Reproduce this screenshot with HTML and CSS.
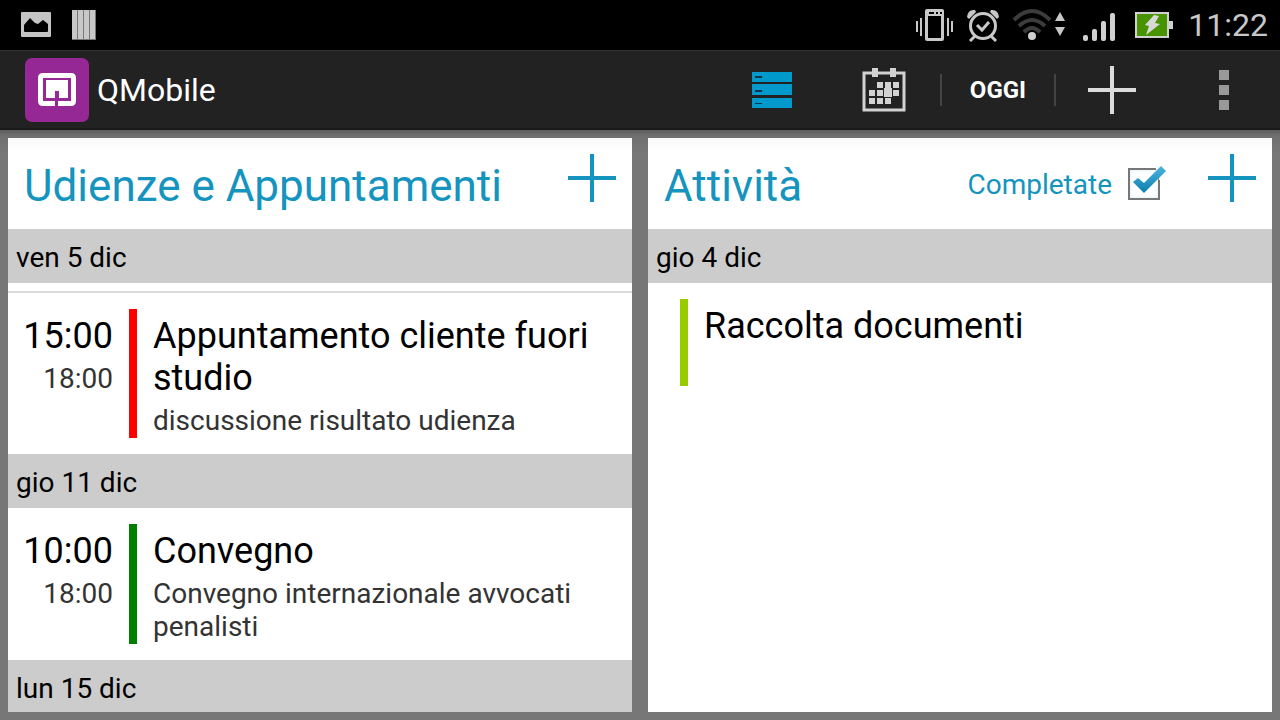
FILE: index.html
```html
<!DOCTYPE html>
<html lang="it">
<head>
    <meta charset="UTF-8">
    <meta name="viewport" content="width=device-width, initial-scale=1.0">
    <title>QMobile</title>
    <link rel="stylesheet" href="styles.css">
</head>
<body>
    <div class="status-bar">
        <div class="status-left">
            <svg width="30" height="26" viewBox="0 0 30 26">
                <path fill="#c4c4c4" fill-rule="evenodd" d="M1 0H29Q30 0 30 1V24Q30 25 29 25H1Q0 25 0 24V1Q0 0 1 0ZM3 13V19Q3 20 4 20H26Q27 20 27 19V12L22 8L17 12L14 11L9 6Z"/>
            </svg>
            <svg width="24" height="30" viewBox="0 0 24 30">
                <rect x="0" y="0" width="24" height="30" fill="#777"/>
                <path fill="#c8c8c8" d="M0 0H5V29H0ZM6 0H11V29H6ZM12 0H17V29H12ZM18 0H23V29H18Z"/>
            </svg>
        </div>
        <div class="status-right">
            <svg width="38" height="34" viewBox="0 0 38 34">
                <path fill="none" stroke="#c8c8c8" stroke-width="2" d="M2 13V24M6 10V28M33 10V28M37 13V24"/>
                <path fill="#c8c8c8" fill-rule="evenodd" d="M12 1H27Q29 1 29 3V31Q29 33 27 33H12Q10 33 10 31V3Q10 1 12 1ZM13 8V30H26V8ZM14 4V6H19V4ZM21 4V6H23V4ZM25 4V6H27V4Z"/>
            </svg>
            <svg width="34" height="34" viewBox="0 0 34 34">
                <circle cx="17" cy="18" r="12.5" fill="none" stroke="#c8c8c8" stroke-width="3"/>
                <path fill="none" stroke="#c8c8c8" stroke-width="3" d="M11 17L16 22L23 14M9 28L4 33M25 28L30 33"/>
                <path fill="#c8c8c8" d="M1 9Q2 1 9 2L10 4L3 11ZM33 9Q32 1 25 2L24 4L31 11Z"/>
            </svg>
            <svg width="57" height="34" viewBox="0 0 57 34">
                <g fill="none" stroke="#3c3c3c" stroke-width="4">
                    <path d="M1 12Q19 -6 37 12"/>
                    <path d="M6 18Q19 6 32 18"/>
                    <path d="M11 24Q19 16 27 24"/>
                </g>
                <circle cx="19" cy="28" r="4" fill="#d0d0d0"/>
                <path fill="#c8c8c8" d="M47 4L52 13H42ZM47 28L52 19H42Z"/>
            </svg>
            <svg width="39" height="34" viewBox="0 0 39 34">
                <g fill="#d0d0d0">
                    <rect x="0" y="27" width="5" height="6" rx="2"/>
                    <rect x="9" y="21" width="5" height="12" rx="2"/>
                    <rect x="18" y="13" width="5" height="20" rx="2"/>
                    <rect x="27" y="5" width="5" height="28" rx="2"/>
                </g>
            </svg>
            <svg width="40" height="34" viewBox="0 0 40 34">
                <rect x="1" y="5" width="32" height="24" fill="#479400" stroke="#d0d0d0" stroke-width="2"/>
                <rect x="34" y="13" width="4" height="8" fill="#d0d0d0"/>
                <path fill="#d8d8d8" d="M19 7L10 17L14 18L11 27L25 16L20 15L24 8Z"/>
            </svg>
            <span class="clock">11:22</span>
        </div>
    </div>

    <header class="action-bar">
        <svg class="app-logo" width="64" height="64" viewBox="0 0 64 64">
            <rect width="64" height="64" rx="7" fill="#962896"/>
            <path fill="#fff" fill-rule="evenodd" d="M18 15H46Q51 15 51 20V43Q51 48 46 48H33V43H46V20H18V43H30V48H18Q13 48 13 43V20Q13 15 18 15Z"/>
            <path fill="#fff" d="M21 22H43V40H34V33H30V40H21Z"/>
        </svg>
        <h1>QMobile</h1>
        <nav class="actions">
            <button class="action" aria-label="Elenco">
                <svg width="40" height="36" viewBox="0 0 40 36">
                    <path fill="#0099cc" d="M0 0H40V10H0ZM0 12H40V23H0ZM0 26H40V36H0Z"/>
                    <path fill="#10364a" d="M3 4H10V6H3ZM3 18H10V20H3ZM3 31H10V32H3Z"/>
                </svg>
            </button>
            <button class="action" aria-label="Calendario">
                <svg width="44" height="44" viewBox="0 0 44 44">
                    <rect x="2" y="5" width="40" height="37" fill="none" stroke="#d2d2d2" stroke-width="3"/>
                    <g fill="#d2d2d2">
                        <path d="M10 0H16V9H10ZM28 0H34V9H28Z"/>
                        <path d="M15 14H21V20H15ZM23 14H29V20H23ZM31 14H37V20H31Z"/>
                        <path d="M7 22H13V28H7ZM15 22H21V28H15ZM22 20H30V29H22ZM31 22H37V28H31Z"/>
                        <path d="M7 30H13V36H7ZM15 30H21V36H15ZM23 30H29V36H23Z"/>
                    </g>
                </svg>
            </button>
            <span class="divider"></span>
            <button class="action today">OGGI</button>
            <span class="divider"></span>
            <button class="action" aria-label="Aggiungi">
                <svg width="48" height="48" viewBox="0 0 48 48">
                    <path fill="#dcdcdc" d="M22 0H26V22H48V26H26V48H22V26H0V22H22Z"/>
                </svg>
            </button>
            <button class="action" aria-label="Altre opzioni">
                <svg width="10" height="40" viewBox="0 0 10 40">
                    <path fill="#999" d="M0 0H10V10H0ZM0 15H10V25H0ZM0 30H10V40H0Z"/>
                </svg>
            </button>
        </nav>
    </header>

    <main class="columns">
        <section class="panel">
            <div class="panel-head">
                <h2>Udienze e Appuntamenti</h2>
                <button class="add" aria-label="Aggiungi appuntamento">
                    <svg width="48" height="48" viewBox="0 0 48 48">
                        <path fill="#1494be" d="M22 0H26V22H48V26H26V48H22V26H0V22H22Z"/>
                    </svg>
                </button>
            </div>
            <h3 class="day">ven 5 dic</h3>
            <hr class="rule">
            <article class="item">
                <div class="time">
                    <div class="start">15:00</div>
                    <div class="end">18:00</div>
                </div>
                <div class="bar red"></div>
                <div class="info">
                    <div class="title">Appuntamento cliente fuori studio</div>
                    <div class="note">discussione risultato udienza</div>
                </div>
            </article>
            <h3 class="day">gio 11 dic</h3>
            <article class="item">
                <div class="time">
                    <div class="start">10:00</div>
                    <div class="end">18:00</div>
                </div>
                <div class="bar green"></div>
                <div class="info">
                    <div class="title">Convegno</div>
                    <div class="note">Convegno internazionale avvocati penalisti</div>
                </div>
            </article>
            <h3 class="day">lun 15 dic</h3>
        </section>

        <section class="panel">
            <div class="panel-head">
                <h2>Attività</h2>
                <label class="completed" for="completed">Completate</label>
                <span class="check">
                    <input type="checkbox" id="completed" checked>
                    <svg width="40" height="34" viewBox="0 0 40 34">
                        <defs>
                            <linearGradient id="tick" x1="0" y1="0" x2="0" y2="1">
                                <stop offset="0" stop-color="#4cb4dc"/>
                                <stop offset="1" stop-color="#0b7fb0"/>
                            </linearGradient>
                        </defs>
                        <path fill="#fff" d="M27 0H40V15H31Z"/>
                        <path fill="url(#tick)" d="M5 17L10 13L16 18L33 1L38 6L16 28Z"/>
                    </svg>
                </span>
                <button class="add" aria-label="Aggiungi attività">
                    <svg width="48" height="48" viewBox="0 0 48 48">
                        <path fill="#1494be" d="M22 0H26V22H48V26H26V48H22V26H0V22H22Z"/>
                    </svg>
                </button>
            </div>
            <h3 class="day">gio 4 dic</h3>
            <article class="item task">
                <div class="bar lime"></div>
                <div class="info">
                    <div class="title">Raccolta documenti</div>
                    <div class="note"></div>
                </div>
            </article>
        </section>
    </main>
</body>
</html>
```

FILE: styles.css
```css
* {
    box-sizing: border-box;
}
body {
    display: flex;
    flex-direction: column;
    height: 100vh;
    margin: 0;
    font-family: Roboto, sans-serif;
    background-color: #777;
    color: black;
}
h1, h2, h3 {
    margin: 0;
    font-weight: normal;
}
button {
    padding: 0;
    border: none;
    background: none;
    font-family: inherit;
    cursor: pointer;
}
svg {
    display: block;
}
.status-bar {
    display: flex;
    justify-content: space-between;
    align-items: center;
    flex: none;
    height: 50px;
    padding: 0 12px 0 21px;
    background-color: black;
}
.status-left {
    display: flex;
    align-items: center;
    gap: 21px;
}
.status-right {
    display: flex;
    align-items: center;
    gap: 13px;
}
.clock {
    color: #c8c8c8;
    font-size: 32px;
}
.action-bar {
    display: flex;
    align-items: center;
    flex: none;
    height: 80px;
    padding-left: 25px;
    border-top: 1px solid #333;
    border-bottom: 2px solid #1a1a1a;
    background-color: #222;
    color: white;
}
.action-bar h1 {
    margin-left: 8px;
    font-size: 32px;
}
.actions {
    display: flex;
    align-items: center;
    margin-left: auto;
}
.action {
    display: flex;
    align-items: center;
    justify-content: center;
    width: 112px;
    height: 77px;
}
.today {
    color: white;
    font-size: 24px;
    font-weight: bold;
}
.divider {
    width: 2px;
    height: 32px;
    background-color: #444;
}
.columns {
    display: grid;
    grid-template-columns: 1fr 1fr;
    gap: 16px;
    flex: 1;
    min-height: 0;
    padding: 8px;
    background: linear-gradient(#5c5c5c, #707070 6px, #777 24px);
}
.panel {
    overflow: hidden;
    background-color: white;
}
.panel-head {
    display: flex;
    align-items: center;
    height: 91px;
    padding: 0 16px;
    background: linear-gradient(#f8f8f8, white 12px);
    color: #1494be;
}
.panel-head h2 {
    margin-right: auto;
    padding-top: 4px;
    font-size: 44px;
}
.add {
    margin-bottom: 11px;
}
.completed {
    margin-right: 16px;
    padding-top: 2px;
    font-size: 28px;
}
.check {
    position: relative;
    margin-right: 48px;
}
.check input {
    display: block;
    appearance: none;
    width: 32px;
    height: 32px;
    margin: 0;
    border: 2px solid #777;
    background-color: white;
    box-shadow: inset 0 0 4px #d8eef6;
}
.check svg {
    position: absolute;
    left: 0;
    bottom: 1px;
    display: none;
    pointer-events: none;
}
.check input:checked + svg {
    display: block;
}
.day {
    height: 54px;
    padding: 0 8px;
    background-color: #ccc;
    font-size: 28px;
    line-height: 58px;
}
.rule {
    margin: 8px 0 0;
    border: none;
    border-top: 2px solid #ddd;
}
.item {
    display: flex;
    gap: 16px;
    padding: 16px 16px 16px 0;
}
.task {
    padding-left: 32px;
}
.time {
    width: 105px;
    padding-top: 6px;
    text-align: right;
}
.bar {
    flex: none;
    width: 8px;
}
.red {
    background-color: #f00;
}
.green {
    background-color: #008000;
}
.lime {
    background-color: #9c0;
}
.info {
    flex: 1;
    padding: 6px 0 1px;
}
.start, .title {
    font-size: 36px;
    line-height: 42px;
}
.end, .note {
    min-height: 33px;
    margin-top: 5px;
    color: #333;
    font-size: 28px;
    line-height: 33px;
}
```
